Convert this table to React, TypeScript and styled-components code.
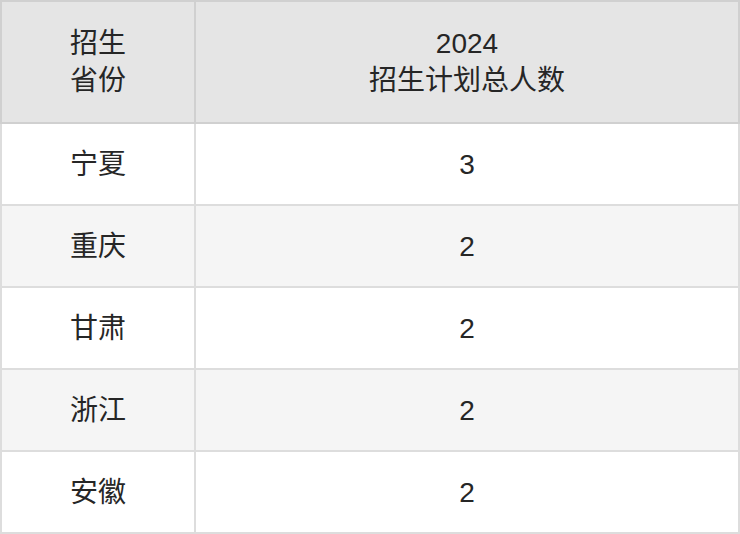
import React from "react";
import styled, { createGlobalStyle } from "styled-components";

const Global = createGlobalStyle`
  html, body { margin: 0; padding: 0; background: #ffffff; }
  body { font-family: "Liberation Sans", "Noto Sans CJK SC", sans-serif; }
`;

const Table = styled.table`
  width: 740px;
  border-collapse: collapse;
  table-layout: fixed;
  color: #262626;
  font-size: 28px;
  font-family: "Liberation Sans", "Noto Sans CJK SC", sans-serif;
`;

const HeadCell = styled.th<{ $w: number }>`
  width: ${(p) => p.$w}px;
  height: 120px;
  padding: 0;
  box-sizing: content-box;
  background: #e5e5e5;
  border: 2px solid #d0d0d0;
  font-weight: normal;
  line-height: 37px;
  text-align: center;
  vertical-align: middle;
`;

const Row = styled.tr<{ $alt: boolean }>`
  background: ${(p) => (p.$alt ? "#f5f5f5" : "#ffffff")};
`;

const Cell = styled.td`
  height: 80px;
  padding: 0;
  box-sizing: content-box;
  border: 2px solid #dddddd;
  text-align: center;
  vertical-align: middle;
  line-height: 37px;
`;

const rows: [string, number][] = [
  ["宁夏", 3],
  ["重庆", 2],
  ["甘肃", 2],
  ["浙江", 2],
  ["安徽", 2],
];

export default function App() {
  return (
    <>
      <Global />
      <Table>
        <thead>
          <tr>
            <HeadCell $w={192}>
              招生
              <br />
              省份
            </HeadCell>
            <HeadCell $w={542}>
              2024
              <br />
              招生计划总人数
            </HeadCell>
          </tr>
        </thead>
        <tbody>
          {rows.map(([name, n], i) => (
            <Row key={name} $alt={i % 2 === 1}>
              <Cell>{name}</Cell>
              <Cell>{n}</Cell>
            </Row>
          ))}
        </tbody>
      </Table>
    </>
  );
}
